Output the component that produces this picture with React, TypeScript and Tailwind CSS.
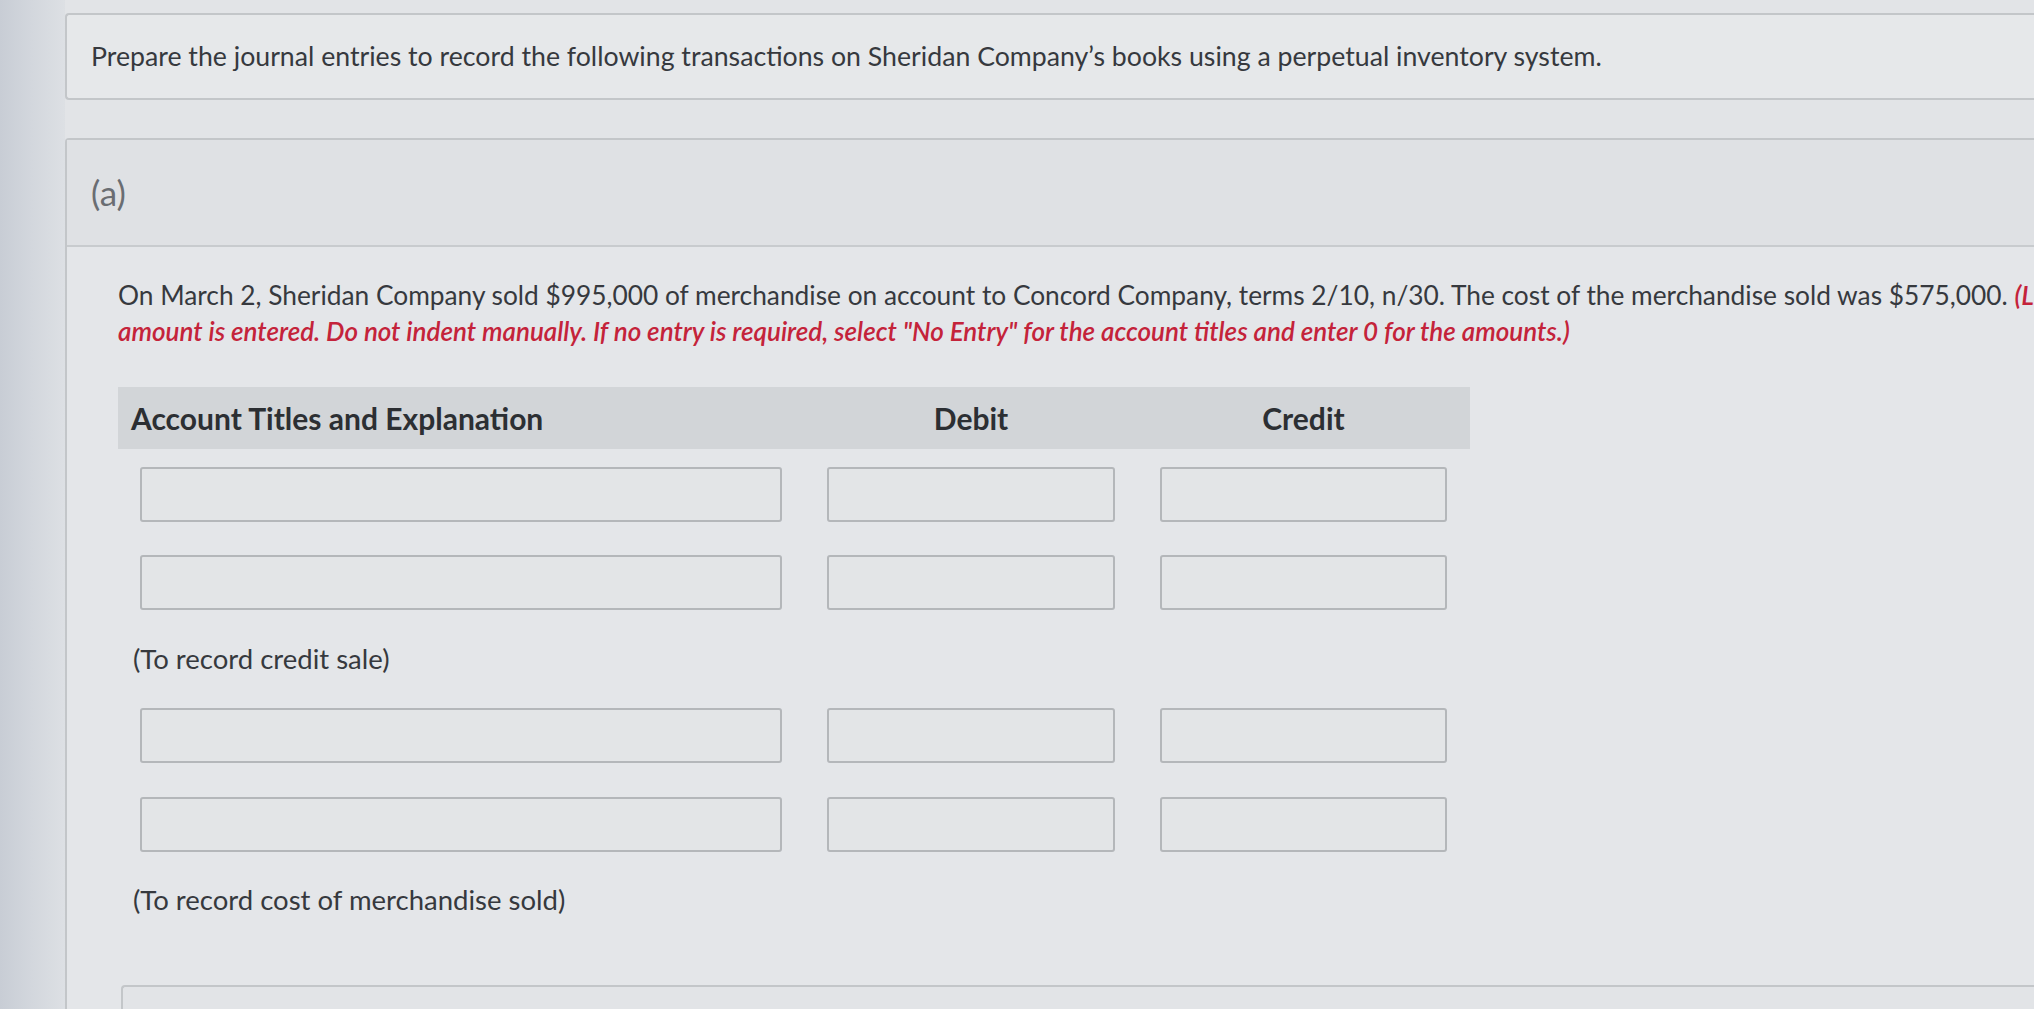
import React from 'react';

const InputRow: React.FC = () => {
  return (
    <div className="grid grid-cols-[642px_288px_287px] gap-x-[45px] px-[22px]">
      <div className="h-[55px] rounded-[3px] border-2 border-[#b4b7ba] bg-[#e3e5e7]"></div>
      <div className="h-[55px] rounded-[3px] border-2 border-[#b4b7ba] bg-[#e3e5e7]"></div>
      <div className="h-[55px] rounded-[3px] border-2 border-[#b4b7ba] bg-[#e3e5e7]"></div>
    </div>
  );
};

export default function App() {
  return (
    <div className="flex h-[1009px] w-full overflow-hidden bg-[#e2e4e7] font-['Lato','Noto_Sans',sans-serif] text-[#36393e]">
      {/* Left strip */}
      <div className="w-[65px] shrink-0 bg-gradient-to-r from-[#c8cdd5] via-[#d3d7dd] to-[#dde0e4]"></div>

      <div className="min-w-0 flex-1 pt-[13px]">
        {/* Instructions card */}
        <div className="flex h-[87px] items-center overflow-hidden whitespace-nowrap rounded-l-[4px] border-y-2 border-l-2 border-[#c3c6c9] bg-[#e6e8ea] pl-[24px] text-[26.7px]">
          Prepare the journal entries to record the following transactions on Sheridan Company’s books using a perpetual inventory system.
        </div>

        {/* Part (a) */}
        <div className="mt-[38px] rounded-tl-[4px] border-l-2 border-t-2 border-[#c3c6c9]">
          <div className="flex h-[107px] items-center border-b-2 border-[#c8cbce] bg-[#dfe1e4] pl-[24px] text-[35px] text-[#6a6d72]">
            (a)
          </div>

          <div className="bg-[#e4e6e9] pl-[51px] pt-[30px]">
            <div className="overflow-hidden whitespace-nowrap text-[26px] leading-[36px]">
              <div className="text-[26.3px]">
                On March 2, Sheridan Company sold $995,000 of merchandise on account to Concord Company, terms 2/10, n/30. The cost of the merchandise sold was $575,000.{' '}
                <span className="font-semibold italic text-[#c4233a]">
                  (List all debit entries before credit entries. Credit account titles are automatically indented when the
                </span>
              </div>
              <div className="font-semibold italic text-[#c4233a]">
                amount is entered. Do not indent manually. If no entry is required, select "No Entry" for the account titles and enter 0 for the amounts.)
              </div>
            </div>

            {/* Journal table */}
            <div className="mt-[38px] w-[1352px]">
              <div className="grid h-[62px] grid-cols-[642px_288px_287px] items-center gap-x-[45px] bg-[#d2d5d8] px-[22px] text-[30px] font-bold text-[#2c2f33]">
                <div className="-ml-[9px]">Account Titles and Explanation</div>
                <div className="text-center">Debit</div>
                <div className="text-center">Credit</div>
              </div>

              <div className="mt-[18px] flex flex-col gap-[33px]">
                <InputRow />
                <InputRow />
              </div>

              <div className="mt-[31px] pl-[15px] text-[27.5px] leading-[36px]">(To record credit sale)</div>

              <div className="mt-[31px] flex flex-col gap-[34px]">
                <InputRow />
                <InputRow />
              </div>

              <div className="mt-[30px] pl-[15px] text-[27.5px] leading-[36px]">
                (To record cost of merchandise sold)
              </div>
            </div>

            {/* Next card, cut off at the bottom */}
            <div className="ml-[3px] mt-[67px] h-[60px] rounded-tl-[4px] border-l-2 border-t-2 border-[#c3c6c9] bg-[#e2e4e7]"></div>
          </div>
        </div>
      </div>
    </div>
  );
}
